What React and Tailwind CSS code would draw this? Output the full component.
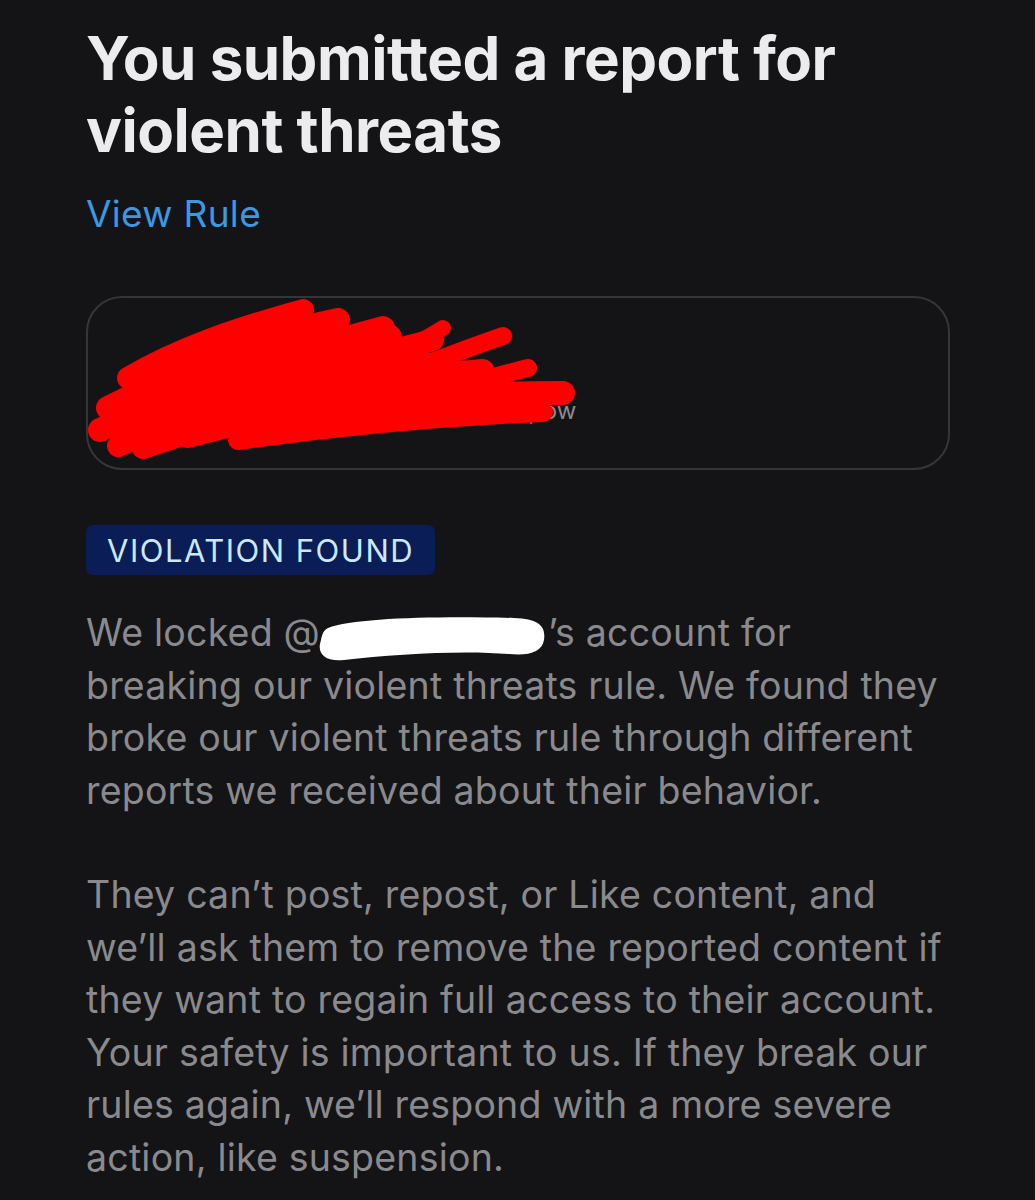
import { Fragment } from 'react'

const font = { fontFamily: 'Inter, "Noto Sans", sans-serif' }

// red marker scribble drawn over the reported account card
function Scribble() {
  return (
    <svg
      className="absolute left-0 top-0 pointer-events-none"
      width="520"
      height="170"
      viewBox="0 0 520 170"
    >
      <g stroke="#ff0000" strokeLinecap="round" strokeLinejoin="round" fill="none">
        <path d="M40 80 C 90 50, 150 30, 215 12" strokeWidth="22" />
        <path d="M20 110 C 80 80, 160 40, 250 22" strokeWidth="24" />
        <path d="M12 132 C 90 95, 200 55, 295 30" strokeWidth="24" />
        <path d="M30 148 C 120 110, 230 70, 345 42" strokeWidth="22" />
        <path d="M55 150 C 150 118, 260 82, 395 72" strokeWidth="22" />
        <path d="M100 138 C 200 110, 320 95, 475 95" strokeWidth="24" />
        <path d="M150 142 C 250 128, 360 118, 455 114" strokeWidth="20" />
        <path d="M200 134 C 280 118, 360 90, 440 70" strokeWidth="18" />
        <path d="M230 110 C 300 80, 380 50, 415 38" strokeWidth="18" />
        <path d="M290 62 C 320 50, 340 40, 355 30" strokeWidth="16" />
        <path d="M60 100 C 120 80, 200 60, 300 40" strokeWidth="28" />
        <path d="M80 128 C 170 100, 260 90, 380 85" strokeWidth="28" />
        <path d="M40 120 C 120 95, 230 70, 330 60" strokeWidth="26" />
        <path d="M110 118 C 200 100, 300 105, 420 100" strokeWidth="24" />
      </g>
    </svg>
  )
}

function Blot() {
  return (
    <span className="inline-block align-middle relative w-[228px] h-[40px] -my-2">
      <svg className="absolute left-[-6px] top-[-6px]" width="236" height="56" viewBox="0 0 236 56">
        <path
          d="M14 18 C 40 8, 120 6, 200 8 C 225 9, 232 16, 230 30 C 228 42, 215 46, 195 44 C 150 40, 80 44, 30 50 C 12 52, 4 44, 6 34 C 8 26, 8 21, 14 18 Z"
          fill="#ffffff"
        />
      </svg>
    </span>
  )
}

const para1 = [
  null,
  'breaking our violent threats rule. We found they',
  'broke our violent threats rule through different',
  'reports we received about their behavior.',
]

const para2 = [
  'They can’t post, repost, or Like content, and',
  'we’ll ask them to remove the reported content if',
  'they want to regain full access to their account.',
  'Your safety is important to us. If they break our',
  'rules again, we’ll respond with a more severe',
  'action, like suspension.',
]

export default function App() {
  return (
    <div className="min-h-[1200px] bg-[#141416] pl-[86px] pr-[60px] pt-[22px]" style={font}>
      <h1 className="text-[60px] leading-[72px] font-bold text-[#ececee] tracking-[-0.5px] whitespace-nowrap">
        You submitted a report for
        <br />
        violent threats
      </h1>

      <a className="block mt-[26px] text-[37px] leading-[44px] text-[#3b98e2] tracking-[0.3px]">View Rule</a>

      <div className="relative mt-[60px] w-[864px] h-[174px] rounded-[36px] border-2 border-[#36363a]">
        <div className="flex items-center gap-4 pl-[60px] pt-[56px]">
          <div className="w-[34px] h-[34px] rounded-full border-2 border-white" />
          <div>
            <div className="text-[26px] text-white">Reported user</div>
            <div className="text-[24px] text-[#8a8a8e] pl-[330px]">pow</div>
          </div>
        </div>
        <Scribble />
      </div>

      <div className="mt-[55px] inline-flex items-center h-[50px] px-[21px] rounded-[7px] bg-[#0b1d57]">
        <span className="text-[31px] leading-none text-[#cbe8fc] tracking-[1.5px] whitespace-nowrap">VIOLATION FOUND</span>
      </div>

      <div className="mt-[32px] text-[37.5px] leading-[52.5px] text-[#8a8a8e] tracking-[0.2px] whitespace-nowrap">
        <p>
          {para1.map((line, i) => (
            <Fragment key={i}>
              {line === null ? (
                <span>
                  We locked @<Blot />’s account for
                </span>
              ) : (
                line
              )}
              {i < para1.length - 1 && <br />}
            </Fragment>
          ))}
        </p>
        <p className="mt-[52px]">
          {para2.map((line, i) => (
            <Fragment key={i}>
              {line}
              {i < para2.length - 1 && <br />}
            </Fragment>
          ))}
        </p>
      </div>
    </div>
  )
}
